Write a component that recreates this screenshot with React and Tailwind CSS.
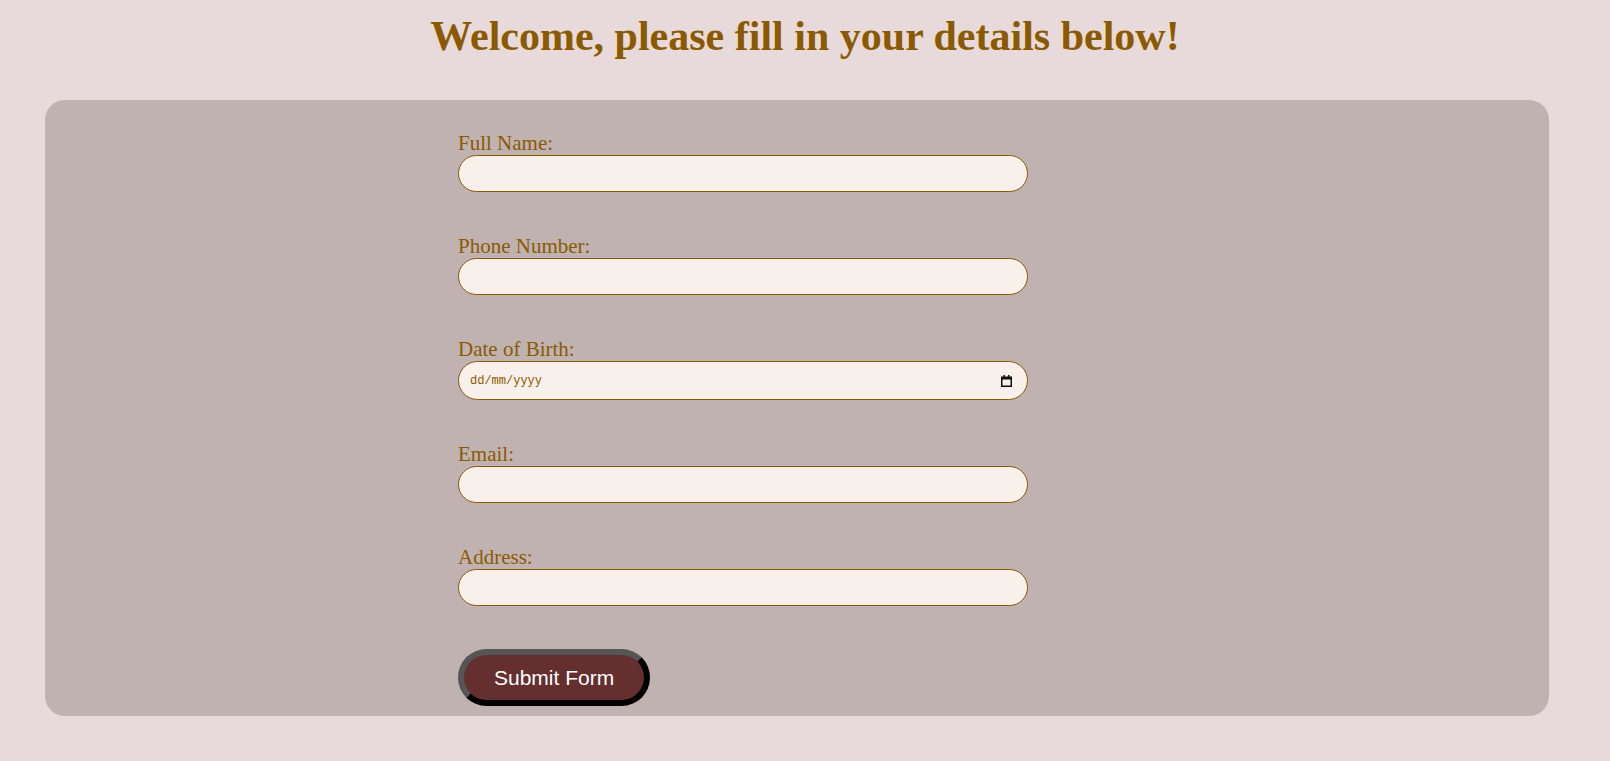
export default function App() {
  const fields = [
    { id: "name", label: "Full Name:", type: "text" },
    { id: "phone", label: "Phone Number:", type: "tel" },
    { id: "dob", label: "Date of Birth:", type: "date" },
    { id: "email", label: "Email:", type: "email" },
    { id: "address", label: "Address:", type: "text" },
  ];

  return (
    <div className="min-h-screen bg-[#e8d9da] pt-[13px] font-['Liberation_Serif',serif]">
      <h1 className="text-center text-[42px] font-bold leading-[46px] text-[#8b5a00]">
        Welcome, please fill in your details below!
      </h1>

      <form
        className="mt-[41px] ml-[45px] w-[1504px] rounded-[20px] bg-[#c0b2b1] pl-[413px] pt-[32px] pb-[10px]"
        onSubmit={(e) => e.preventDefault()}
      >
        <div className="flex w-[570px] flex-col">
          {fields.map((f) => (
            <div key={f.id} className="mb-[43px] flex flex-col">
              <label htmlFor={f.id} className="text-[21px] leading-[23px] text-[#8b5a00]">
                {f.label}
              </label>
              {f.type === "date" ? (
                <div className="flex h-[39px] items-center rounded-full border border-[#8b5a00] bg-[#f8f0ea] pl-[11px] pr-[15px]">
                  <input
                    id={f.id}
                    type="text"
                    placeholder="dd/mm/yyyy"
                    className="min-w-0 flex-1 bg-transparent font-['Liberation_Mono',monospace] text-[12px] text-[#8b5a00] outline-none placeholder:text-[#8b5a00]"
                  />
                  <svg width="11" height="12" viewBox="0 0 11 12" className="shrink-0">
                    <rect x="0.75" y="2.25" width="9.5" height="9" fill="none" stroke="#111" strokeWidth="1.5" />
                    <rect x="0.75" y="2" width="9.5" height="2.5" fill="#111" />
                    <rect x="2.5" y="0" width="1.5" height="2.5" fill="#111" />
                    <rect x="7" y="0" width="1.5" height="2.5" fill="#111" />
                  </svg>
                </div>
              ) : (
                <input
                  id={f.id}
                  type={f.type}
                  className="h-[37px] rounded-full border border-[#8b5a00] bg-[#f8f0ea] px-[12px] text-[16px] text-[#8b5a00] outline-none"
                />
              )}
            </div>
          ))}
        </div>

        <button
          type="submit"
          className="h-[57px] rounded-full border-[6px] border-t-[#555555] border-l-[#555555] border-r-black border-b-black bg-[#652f2f] px-[30px] font-['Liberation_Sans',Arial,sans-serif] text-[21px] text-white"
        >
          Submit Form
        </button>
      </form>
    </div>
  );
}
